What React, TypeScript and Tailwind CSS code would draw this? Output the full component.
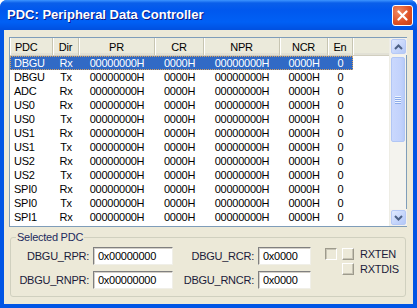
import React from 'react';

type Col = { name: string; w: string; head: string; cell: string };

const cols: Col[] = [
  { name: 'PDC', w: 'w-[43px]', head: 'justify-start pl-[5px]', cell: 'justify-start pl-[4px]' },
  { name: 'Dir', w: 'w-[26px]', head: 'justify-center', cell: 'justify-center' },
  { name: 'PR', w: 'w-[76px]', head: 'justify-center', cell: 'justify-center' },
  { name: 'CR', w: 'w-[49px]', head: 'justify-center', cell: 'justify-center' },
  { name: 'NPR', w: 'w-[76px]', head: 'justify-center', cell: 'justify-center' },
  { name: 'NCR', w: 'w-[48px]', head: 'justify-center', cell: 'justify-center' },
  { name: 'En', w: 'w-[25px]', head: 'justify-center', cell: 'justify-center' },
];

const channels: [string, string][] = [
  ['DBGU', 'Rx'], ['DBGU', 'Tx'], ['ADC', 'Rx'], ['US0', 'Rx'], ['US0', 'Tx'], ['US1', 'Rx'],
  ['US1', 'Tx'], ['US2', 'Rx'], ['US2', 'Tx'], ['SPI0', 'Rx'], ['SPI0', 'Tx'], ['SPI1', 'Rx'],
];

const Arrow: React.FC<{ down?: boolean }> = ({ down }) => (
  <svg width="9" height="6" viewBox="0 0 9 6">
    <path
      d={down ? 'M1 1 L4.5 4.5 L8 1' : 'M1 5 L4.5 1.5 L8 5'}
      fill="none"
      stroke="#4d6185"
      strokeWidth="2"
    />
  </svg>
);

const ScrollBtn: React.FC<{ down?: boolean }> = ({ down }) => (
  <div className="h-[17px] w-[17px] p-[1px] bg-[#f3f1ec]">
    <div className="h-full w-full rounded-[2px] border border-[#b6c9f6] bg-[linear-gradient(135deg,#e1eafe,#c4d4fb_60%,#b4c8f6)] flex items-center justify-center">
      <Arrow down={down} />
    </div>
  </div>
);

const ScrollBar = () => (
  <div className="w-[17px] h-full flex flex-col bg-[#f4f3ee] border-l border-l-[#eeede5]">
    <ScrollBtn />
    <div className="flex-1 px-[1px] pt-[2px]">
      <div className="h-[85px] rounded-[2px] border border-[#b1c6f5] bg-[linear-gradient(90deg,#cad8fd,#c2d2fc_70%,#b7cbf8)] flex flex-col items-center justify-center gap-[1px]">
        {[0, 1, 2, 3].map((i) => (
          <div key={i} className="w-[6px] h-[1px] bg-[#eef4fe] shadow-[0_1px_0_#8cabe9]" />
        ))}
      </div>
    </div>
    <ScrollBtn down />
  </div>
);

const ListView = () => (
  <div className="ml-[5px] mt-[7px] w-[398px] h-[190px] border border-[#7f9db9] bg-white flex">
    <div className="flex-1 flex flex-col">
      <div className="h-[18px] flex bg-[#ebeadb] border-b border-b-[#d1cebf] shadow-[inset_0_-2px_0_#e2e1d6]">
        {cols.map((c) => (
          <div
            key={c.name}
            className={`${c.w} ${c.head} h-full flex items-center border-r border-r-[#c7c5b2] shadow-[inset_1px_0_0_#ffffff]`}
          >
            {c.name}
          </div>
        ))}
        <div className="flex-1 h-full shadow-[inset_1px_0_0_#ffffff]" />
      </div>
      {channels.map(([pdc, dir], i) => {
        const vals = [pdc, dir, '00000000H', '0000H', '00000000H', '0000H', '0'];
        const sel = i === 0;
        return (
          <div
            key={i}
            className={`w-[343px] h-[14px] flex ${sel ? 'bg-[#316ac5] text-white outline-1 outline-dotted outline-offset-[-1px] outline-[#d9a25e]' : 'text-black'}`}
          >
            {cols.map((c, j) => (
              <div key={c.name} className={`${c.w} ${c.cell} h-full flex items-center`}>
                {vals[j]}
              </div>
            ))}
          </div>
        );
      })}
    </div>
    <ScrollBar />
  </div>
);

const Field: React.FC<{ label: string; value: string; lw: string; iw: string }> = ({ label, value, lw, iw }) => (
  <div className="flex items-center h-[18px]">
    <div className={`${lw} text-right text-[#1b1b3a]`}>{label}</div>
    <div className={`${iw} ml-[4px] h-[18px] bg-white border border-t-[#808080] border-l-[#808080] border-b-[#f0efe8] border-r-[#f0efe8] shadow-[inset_1px_1px_0_#d4d0c8] flex items-center pl-[4px] text-black`}>
      {value}
    </div>
  </div>
);

const SunkenBox = () => (
  <div className="w-[12px] h-[12px] border border-t-[#9d9a8c] border-l-[#9d9a8c] border-b-white border-r-white shadow-[inset_1px_1px_0_#c7c4b5] bg-[#ece9d8]" />
);

const RaisedBox = () => (
  <div className="w-[12px] h-[12px] border border-t-white border-l-white border-b-[#9d9a8c] border-r-[#9d9a8c] shadow-[inset_-1px_-1px_0_#c7c4b5] bg-[#ece9d8]" />
);

const SelectedGroup = () => (
  <div className="relative ml-[6px] mt-[10px] w-[396px] h-[60px] border border-[#d0d0bf] rounded-[3px] pt-[9px] flex">
    <div className="absolute left-[5px] top-[-8px] px-[1px] bg-[#ece9d8] text-[#1c2a5e] leading-[14px]">Selected PDC</div>
    <div className="flex flex-col gap-[6px]">
      <div className="flex">
        <Field label="DBGU_RPR:" value="0x00000000" lw="w-[78px]" iw="w-[80px]" />
        <Field label="DBGU_RCR:" value="0x0000" lw="w-[81px]" iw="w-[53px]" />
      </div>
      <div className="flex">
        <Field label="DBGU_RNPR:" value="0x00000000" lw="w-[78px]" iw="w-[80px]" />
        <Field label="DBGU_RNCR:" value="0x0000" lw="w-[81px]" iw="w-[53px]" />
      </div>
    </div>
    <div className="ml-[14px] pt-[1px] flex flex-col gap-[3px]">
      <div className="h-[12px] flex items-center">
        <SunkenBox />
        <div className="ml-[5px]"><RaisedBox /></div>
        <span className="ml-[6px] text-[#1b1b3a]">RXTEN</span>
      </div>
      <div className="h-[12px] flex items-center">
        <div className="ml-[17px]"><RaisedBox /></div>
        <span className="ml-[6px] text-[#1b1b3a]">RXTDIS</span>
      </div>
    </div>
  </div>
);

export default function App() {
  return (
    <div className="w-[417px] h-[308px] bg-white font-['Liberation_Sans',Arial,sans-serif] text-[11px] leading-[14px] tracking-[-0.25px]">
      <div className="w-full h-full rounded-t-[7px] bg-[#0055e5] flex flex-col overflow-hidden">
        <div className="h-[30px] shrink-0 flex items-center pl-[7px] pr-[4px] bg-[linear-gradient(to_bottom,#3d95ff_0px,#0a5fea_3px,#0058ee_10px,#0060f5_22px,#0050e0_30px)]">
          <span className="flex-1 text-white font-bold text-[13px] [text-shadow:1px_1px_0_#0a1883] tracking-[0px]">
            PDC: Peripheral Data Controller
          </span>
          <div className="w-[21px] h-[21px] rounded-[3px] border border-white bg-[radial-gradient(circle_at_30%_30%,#f08a62,#dd4e22_60%,#c2401a)] flex items-center justify-center">
            <svg width="11" height="11" viewBox="0 0 11 11">
              <path d="M1.5 1.5 L9.5 9.5 M9.5 1.5 L1.5 9.5" stroke="#ffffff" strokeWidth="2.2" strokeLinecap="round" />
            </svg>
          </div>
        </div>
        <div className="mx-[4px] h-[274px] bg-[#ece9d8] flex flex-col">
          <ListView />
          <SelectedGroup />
        </div>
      </div>
    </div>
  );
}
